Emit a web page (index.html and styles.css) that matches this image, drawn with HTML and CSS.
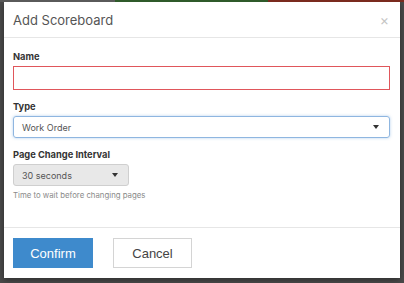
FILE: index.html
```html
<!DOCTYPE html>
<html lang="en">
<head>
  <meta charset="UTF-8">
  <title>Add Scoreboard</title>
  <link rel="stylesheet" href="styles.css">
</head>
<body>
  <!-- trang phía sau modal -->
  <div class="backdrop-strip">
    <span class="strip-grey"></span>
    <span class="strip-green"></span>
    <span class="strip-red"></span>
  </div>

  <div class="modal">
    <div class="modal-header">
      <h3>Add Scoreboard</h3>
      <span class="modal-close">&times;</span>
    </div>

    <div class="modal-body">
      <div class="field">
        <label>Name</label>
        <div class="text-input invalid"></div>
      </div>
      <div class="field">
        <label>Type</label>
        <div class="select-input focused">
          <span>Work Order</span>
          <i class="caret"></i>
        </div>
      </div>
      <div class="field">
        <label>Page Change Interval</label>
        <div class="dropdown-btn">
          <span>30 seconds</span>
          <i class="caret"></i>
        </div>
        <p class="help">Time to wait before changing pages</p>
      </div>
    </div>

    <div class="modal-footer">
      <button class="btn btn-primary">Confirm</button>
      <button class="btn btn-default">Cancel</button>
    </div>
  </div>
</body>
</html>
```

FILE: styles.css
```css
* {
  box-sizing: border-box;
}
body {
  margin: 0;
  width: 404px;
  height: 283px;
  overflow: hidden;
  background-color: #4a4a4a;
  font-family: Inter, 'Noto Sans', sans-serif;
}
/* --- dải màu phía trên --- */
.backdrop-strip {
  display: flex;
  height: 2px;
}
.strip-grey { width: 115px; background-color: #5a5a5a; }
.strip-green { width: 153px; background-color: #2f5a2a; }
.strip-red { flex: 1; background-color: #7a2a1e; }

/* --- Modal --- */
.modal {
  width: 396px;
  height: 276px;
  margin-left: 4px;
  background-color: #fff;
  box-shadow: 0 2px 6px rgba(0,0,0,0.4);
  display: flex;
  flex-direction: column;
}
.modal-header {
  height: 36px;
  padding: 0 11px 0 9px;
  border-bottom: 1px solid #e6e6e6;
  display: flex;
  align-items: center;
  justify-content: space-between;
}
.modal-header h3 {
  margin: 0;
  font-size: 13px;
  font-weight: 400;
  color: #555;
}
.modal-close {
  font-size: 14px;
  color: #c4c4c4;
  line-height: 1;
}
.modal-body {
  flex: 1;
  padding: 12px 10px 0 9px;
  border-bottom: 1px solid #e6e6e6;
}
.field {
  margin-bottom: 10px;
}
.field label {
  display: block;
  height: 14px;
  line-height: 14px;
  margin-bottom: 2px;
  font-size: 9.3px;
  font-weight: 700;
  color: #333;
}
.text-input {
  height: 24px;
  border: 1px solid #ccc;
}
.text-input.invalid {
  border-color: #e0565b;
}
.select-input {
  height: 22px;
  margin-top: 1px;
  padding: 0 10px 0 8px;
  border: 1px solid #8fb6e0;
  border-radius: 3px;
  box-shadow: 0 0 3px rgba(102,160,220,0.5);
  display: flex;
  align-items: center;
  justify-content: space-between;
  font-size: 9px;
  color: #555;
}
.caret {
  width: 0;
  height: 0;
  border-left: 3px solid transparent;
  border-right: 3px solid transparent;
  border-top: 4px solid #333;
}
.dropdown-btn {
  width: 116px;
  height: 22px;
  padding: 0 10px 0 8px;
  background-color: #e8e8e8;
  border: 1px solid #cfcfcf;
  border-radius: 3px;
  display: flex;
  align-items: center;
  justify-content: space-between;
  font-size: 9px;
  color: #555;
}
.help {
  margin: 3px 0 0;
  font-size: 7.8px;
  line-height: 12px;
  color: #8a8a8a;
}
/* --- Footer --- */
.modal-footer {
  height: 50px;
  padding: 10px 9px;
  display: flex;
  gap: 20px;
}
.btn {
  width: 80px;
  height: 30px;
  font-family: 'Liberation Sans', Arial, sans-serif;
  font-size: 13px;
  border-radius: 0;
  cursor: pointer;
}
.btn-primary {
  background-color: #3e8acc;
  border: 1px solid #3e8acc;
  color: #fff;
}
.btn-default {
  width: 79px;
  background-color: #fff;
  border: 1px solid #d4d4d4;
  color: #444;
}
```
